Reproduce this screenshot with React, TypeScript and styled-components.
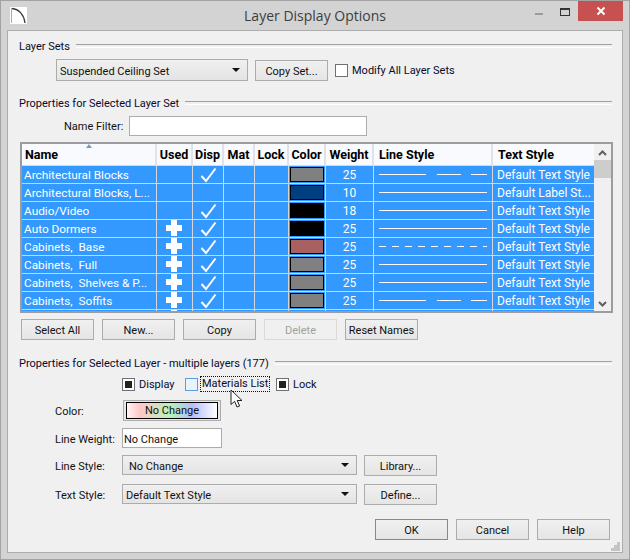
import styled, { createGlobalStyle } from 'styled-components';

const GlobalStyle = createGlobalStyle`
  html, body {
    margin: 0;
    padding: 0;
    background: #d3d3d3;
  }
  * {
    box-sizing: border-box;
  }
`;

const layers = [
  { name: 'Architectural Blocks', used: false, disp: true, color: '#808080', weight: '25', line: 'mixed', text: 'Default Text Style' },
  { name: 'Architectural Blocks, L...', used: false, disp: false, color: '#004080', weight: '10', line: 'solid', text: 'Default Label St...' },
  { name: 'Audio/Video', used: false, disp: true, color: '#000000', weight: '18', line: 'solid', text: 'Default Text Style' },
  { name: 'Auto Dormers', used: true, disp: true, color: '#000000', weight: '25', line: 'solid', text: 'Default Text Style' },
  { name: 'Cabinets,  Base', used: true, disp: true, color: '#a86060', weight: '25', line: 'dashed', text: 'Default Text Style' },
  { name: 'Cabinets,  Full', used: true, disp: true, color: '#808080', weight: '25', line: 'solid', text: 'Default Text Style' },
  { name: 'Cabinets,  Shelves & P...', used: true, disp: true, color: '#808080', weight: '25', line: 'solid', text: 'Default Text Style' },
  { name: 'Cabinets,  Soffits', used: true, disp: true, color: '#808080', weight: '25', line: 'mixed', text: 'Default Text Style' },
  // only the top pixel of this row shows under the list, so just the plus is seen
  { name: '', used: true, disp: false, color: 'transparent', weight: '', line: 'none', text: '' },
];

const COLUMNS = '135px 36px 31px 31px 34px 37px 48px 119px 101px';

const LineSample = ({ kind }: { kind: string }) => (
  <svg width="118" height="17" viewBox="0 0 118 17">
    {kind === 'solid' && <line x1="5" x2="113" y1="8.5" y2="8.5" stroke="#fff" />}
    {kind === 'dashed' && <line x1="5" x2="113" y1="8.5" y2="8.5" stroke="#fff" strokeDasharray="7 6" />}
    {kind === 'mixed' && (
      <>
        <line x1="5" x2="52" y1="8.5" y2="8.5" stroke="#fff" />
        <line x1="63" x2="87" y1="8.5" y2="8.5" stroke="#fff" />
        <line x1="97" x2="113" y1="8.5" y2="8.5" stroke="#fff" />
      </>
    )}
  </svg>
);

const App = () => (
  <>
    <GlobalStyle />
    <Window>
      <TitleBar>
        <AppIcon width="17" height="17" viewBox="0 0 17 17">
          <rect x="0" y="0" width="17" height="17" fill="#fff" />
          <line x1="1.5" y1="1" x2="1.5" y2="16" stroke="#a4c24a" strokeWidth="1" />
          <path d="M2 1.5 C9 2 14 8 15 16" fill="none" stroke="#3a3a3a" strokeWidth="1.3" />
        </AppIcon>
        <Title>Layer Display Options</Title>
        <Minimize />
        <Maximize />
        <CloseButton>
          <svg width="10" height="10" viewBox="0 0 10 10">
            <path d="M1.5 1.5 L8.5 8.5 M8.5 1.5 L1.5 8.5" stroke="#fff" strokeWidth="2" />
          </svg>
        </CloseButton>
      </TitleBar>

      <Client>
        <GroupHeading $top={7}>
          <span>Layer Sets</span>
        </GroupHeading>
        <SetRow>
          <Combo $width={192} $height={22} $textInset={3}>
            <span>Suspended Ceiling Set</span>
            <Arrow />
          </Combo>
          <Button $width={73}>Copy Set...</Button>
          <CheckItem $width={100}>
            <CheckBox />
            Modify All Layer Sets
          </CheckItem>
        </SetRow>

        <GroupHeading $top={14}>
          <span>Properties for Selected Layer Set</span>
        </GroupHeading>
        <FilterRow>
          <FilterLabel>Name Filter:</FilterLabel>
          <TextField $width={238} $height={20} />
        </FilterRow>

        <Table>
          <HeaderRow>
            <HeaderCell>Name</HeaderCell>
            <HeaderCell $center>Used</HeaderCell>
            <HeaderCell $center>Disp</HeaderCell>
            <HeaderCell $center>Mat</HeaderCell>
            <HeaderCell $center>Lock</HeaderCell>
            <HeaderCell $center>Color</HeaderCell>
            <HeaderCell $center>Weight</HeaderCell>
            <HeaderCell>Line Style</HeaderCell>
            <HeaderCell>Text Style</HeaderCell>
            <SortArrow />
          </HeaderRow>
          <Body>
            {layers.map((layer) => (
              <Row key={layer.name}>
                <NameCell>{layer.name}</NameCell>
                <UsedCell $center>
                  {layer.used && (
                    <svg width="16" height="17" viewBox="0 0 16 17">
                      <path d="M5 0h6v5h5v6h-5v5H5v-5H0V5h5z" fill="#fff" />
                    </svg>
                  )}
                </UsedCell>
                <Cell $center>
                  {layer.disp && (
                    <svg width="17" height="16" viewBox="0 0 17 16">
                      <path d="M1.5 9 L6 14 L15.5 1.5" fill="none" stroke="#fff" strokeWidth="2" />
                    </svg>
                  )}
                </Cell>
                <Cell />
                <Cell />
                <Cell $center>
                  {layer.weight && <Swatch $color={layer.color} />}
                </Cell>
                <TextCell $center>{layer.weight}</TextCell>
                <LineCell>
                  <LineSample kind={layer.line} />
                </LineCell>
                <StyleCell>{layer.text}</StyleCell>
              </Row>
            ))}
          </Body>
          <ScrollBar>
            <svg width="9" height="6" viewBox="0 0 9 6">
              <path d="M1 5 L4.5 1.5 L8 5" fill="none" stroke="#606060" strokeWidth="2" />
            </svg>
            <Thumb />
            <svg width="9" height="6" viewBox="0 0 9 6">
              <path d="M1 1 L4.5 4.5 L8 1" fill="none" stroke="#606060" strokeWidth="2" />
            </svg>
          </ScrollBar>
        </Table>

        <ButtonRow>
          <Button $width={73}>Select All</Button>
          <Button $width={73}>New...</Button>
          <Button $width={73}>Copy</Button>
          <Button $width={73} $disabled>Delete</Button>
          <Button $width={73}>Reset Names</Button>
        </ButtonRow>

        <GroupHeading $top={15}>
          <span>Properties for Selected Layer - multiple layers (177)</span>
        </GroupHeading>

        <ChecksRow>
          <CheckItem $width={63}>
            <CheckBox $mixed />
            Display
          </CheckItem>
          <CheckItem $width={91} $gap={2}>
            <CheckBox $hover />
            <FocusLabel>Materials List</FocusLabel>
          </CheckItem>
          <CheckItem $width={50}>
            <CheckBox $mixed />
            Lock
          </CheckItem>
        </ChecksRow>

        <FormRow $top={8}>
          <FieldLabel>Color:</FieldLabel>
          <ColorButton>
            <ColorFace>No Change</ColorFace>
          </ColorButton>
        </FormRow>
        <FormRow $top={7}>
          <FieldLabel>Line Weight:</FieldLabel>
          <TextField $width={100} $height={20}>No Change</TextField>
        </FormRow>
        <FormRow $top={6}>
          <FieldLabel>Line Style:</FieldLabel>
          <Combo $width={235} $height={20} $textInset={6}>
            <span>No Change</span>
            <Arrow />
          </Combo>
          <Button $width={73}>Library...</Button>
        </FormRow>
        <FormRow $top={8}>
          <FieldLabel>Text Style:</FieldLabel>
          <Combo $width={235} $height={20} $textInset={3}>
            <span>Default Text Style</span>
            <Arrow />
          </Combo>
          <Button $width={73}>Define...</Button>
        </FormRow>

        <DialogButtons>
          <Button $width={73} $focused>OK</Button>
          <Button $width={73}>Cancel</Button>
          <Button $width={73}>Help</Button>
        </DialogButtons>

        <Grip width="9" height="9" viewBox="0 0 9 9">
          <path d="M6 0h3v3H6zM3 3h3v3H3zM6 3h3v3H6zM0 6h3v3H0zM3 6h3v3H3zM6 6h3v3H6z" fill="#c4c4c4" />
        </Grip>
      </Client>

      <Cursor width="14" height="20" viewBox="0 0 14 20">
        <path
          d="M1 1 L1 15.5 L4.6 12.3 L7 18 L9.6 17 L7.2 11.5 L12 11.5 Z"
          fill="#fff"
          stroke="#222"
          strokeWidth="1"
        />
      </Cursor>
    </Window>
  </>
);

const Window = styled.div`
  position: relative;
  width: 630px;
  height: 560px;
  display: flex;
  flex-direction: column;
  background: #d3d3d3;
  border: 1px solid #a3a3a3;
  font-family: Roboto, 'Open Sans', sans-serif;
  font-size: 11px;
  color: #111;
`;

const TitleBar = styled.div`
  position: relative;
  height: 29px;
  flex: none;
  display: flex;
  align-items: flex-start;
`;

const AppIcon = styled.svg`
  position: absolute;
  left: 9px;
  top: 6px;
`;

const Title = styled.div`
  width: 100%;
  text-align: center;
  font-family: 'Open Sans', sans-serif;
  font-size: 14px;
  line-height: 29px;
  color: #3d3d3d;
`;

const Minimize = styled.div`
  position: absolute;
  left: 534px;
  top: 12px;
  width: 8px;
  height: 2px;
  background: #9a9a9a;
`;

const Maximize = styled.div`
  position: absolute;
  left: 559px;
  top: 7px;
  width: 10px;
  height: 8px;
  border: 1px solid #333;
  border-top-width: 2px;
`;

const CloseButton = styled.div`
  position: absolute;
  right: 6px;
  top: 0;
  width: 45px;
  height: 20px;
  display: flex;
  align-items: center;
  justify-content: center;
  background: #c75050;
`;

const Client = styled.div`
  position: relative;
  flex: none;
  height: 523px;
  margin: 0 6px 0 6px;
  padding: 0 10px 0 11px;
  display: flex;
  flex-direction: column;
  background: #f0f0f0;
  border: 1px solid #acacac;
`;

const GroupHeading = styled.div<{ $top: number }>`
  margin-top: ${(p) => p.$top}px;
  height: 16px;
  flex: none;
  display: flex;
  align-items: center;
  gap: 6px;
  line-height: 16px;
  color: #0a0a2a;

  span {
    margin-top: 2px;
  }

  &::after {
    content: '';
    flex: 1;
    height: 2px;
    border-top: 1px solid #a0a0a0;
    border-bottom: 1px solid #fff;
  }
`;

const SetRow = styled.div`
  margin: 5px 0 0 37px;
  height: 22px;
  flex: none;
  display: flex;
  align-items: center;
  gap: 7px;
`;

const Combo = styled.div<{ $width: number; $height: number; $textInset: number }>`
  width: ${(p) => p.$width}px;
  height: ${(p) => p.$height}px;
  flex: none;
  align-self: flex-start;
  display: flex;
  align-items: center;
  justify-content: space-between;
  padding: 0 7px 0 ${(p) => p.$textInset}px;
  background: linear-gradient(#f0f0f0, #e4e4e4);
  border: 1px solid #acacac;
  white-space: nowrap;

  span:first-child {
    margin-top: 2px;
  }
`;

const Arrow = styled.span`
  width: 0;
  height: 0;
  border-left: 4px solid transparent;
  border-right: 4px solid transparent;
  border-top: 4px solid #111;
`;

const Button = styled.div<{ $width: number; $disabled?: boolean; $focused?: boolean }>`
  width: ${(p) => p.$width}px;
  height: 21px;
  flex: none;
  align-self: flex-end;
  padding-top: 1px;
  display: flex;
  align-items: center;
  justify-content: center;
  white-space: nowrap;
  background: ${(p) => (p.$disabled ? '#f0f0f0' : 'linear-gradient(#f0f0f0, #e5e5e5)')};
  border: 1px solid ${(p) => (p.$disabled ? '#d9d9d9' : p.$focused ? '#3c9bf0' : '#acacac')};
  color: ${(p) => (p.$disabled ? '#a0a0a0' : '#111')};
`;

const CheckItem = styled.div<{ $width: number; $gap?: number }>`
  width: ${(p) => p.$width}px;
  flex: none;
  display: flex;
  align-items: center;
  gap: ${(p) => p.$gap ?? 4}px;
  white-space: nowrap;
  color: #0a0a2a;
`;

const CheckBox = styled.span<{ $mixed?: boolean; $hover?: boolean }>`
  width: 13px;
  height: 13px;
  flex: none;
  display: flex;
  align-items: center;
  justify-content: center;
  background: ${(p) => (p.$hover ? '#e9f3fd' : '#fff')};
  border: 1px solid ${(p) => (p.$hover ? '#5b9fe0' : '#707070')};

  &::after {
    content: '';
    display: ${(p) => (p.$mixed ? 'block' : 'none')};
    width: 7px;
    height: 7px;
    background: #222;
  }
`;

const FocusLabel = styled.span`
  padding: 0 1px;
  height: 16px;
  line-height: 14px;
  border: 1px dotted #111;
`;

const FilterRow = styled.div`
  margin: 5px 0 0 45px;
  height: 20px;
  flex: none;
  display: flex;
  align-items: center;
  gap: 7px;
`;

const FilterLabel = styled.span`
  width: 58px;
  padding-top: 1px;
  text-align: right;
  white-space: nowrap;
`;

const TextField = styled.div<{ $width: number; $height: number }>`
  width: ${(p) => p.$width}px;
  height: ${(p) => p.$height}px;
  flex: none;
  align-self: flex-start;
  padding: 2px 0 0 1px;
  display: flex;
  align-items: center;
  background: #fff;
  border: 1px solid #acacac;
`;

const Table = styled.div`
  position: relative;
  margin: 6px 0 0 1px;
  width: 593px;
  height: 171px;
  flex: none;
  display: grid;
  grid-template-columns: 572px 17px;
  grid-template-rows: 22px 1fr;
  border: 2px solid #9b9ba0;
  background: #fff;
`;

const HeaderRow = styled.div`
  position: relative;
  display: grid;
  grid-template-columns: ${COLUMNS};
  background: #f9fafd;
`;

const HeaderCell = styled.div<{ $center?: boolean }>`
  display: flex;
  align-items: center;
  justify-content: ${(p) => (p.$center ? 'center' : 'flex-start')};
  padding-left: ${(p) => (p.$center ? 0 : 3)}px;
  font-weight: 700;
  font-size: 12.5px;
  color: #000;
  white-space: nowrap;
  border-right: 2px solid #dfe3e8;
  border-bottom: 1px solid #d6dae0;

  &:nth-child(8) {
    padding-left: 5px;
  }
  &:nth-child(9) {
    padding-left: 5px;
    border-right: 0;
  }
`;

const SortArrow = styled.span`
  position: absolute;
  left: 64px;
  top: 0;
  width: 0;
  height: 0;
  border-left: 3.5px solid transparent;
  border-right: 3.5px solid transparent;
  border-bottom: 4px solid #7b9cb8;
`;

const Body = styled.div`
  grid-column: 1;
  overflow: hidden;
  min-height: 0;
  background: #3399ff;
`;

const Row = styled.div`
  display: grid;
  grid-template-columns: ${COLUMNS};
  height: 18px;
  border-bottom: 1px solid #d2d6da;
`;

const Cell = styled.div<{ $center?: boolean }>`
  min-width: 0;
  display: flex;
  align-items: center;
  justify-content: ${(p) => (p.$center ? 'center' : 'flex-start')};
  padding-left: ${(p) => (p.$center ? 0 : 3)}px;
  font-size: 12px;
  color: #fff;
  white-space: pre;
  overflow: visible;
  background: #3399ff;
  border-right: 1px solid #d2d6da;

  &:last-child {
    border-right: 0;
  }
`;

const TextCell = styled(Cell)`
  padding-top: 1px;
`;

const NameCell = styled(TextCell)`
  padding-left: 2px;
  font-size: 11.8px;
`;

const StyleCell = styled(TextCell)`
  padding-left: 4px;
`;

const UsedCell = styled(Cell)`
  padding-right: 1px;
`;

const LineCell = styled(Cell)`
  padding-left: 0;
`;

const Swatch = styled.span<{ $color: string }>`
  width: 34px;
  height: 15px;
  background: ${(p) => p.$color};
  border: 1px solid #000;
`;

const ScrollBar = styled.div`
  grid-column: 2;
  grid-row: 1 / span 2;
  display: flex;
  flex-direction: column;
  align-items: center;
  padding-top: 6px;
  padding-bottom: 4px;
  background: #f0f0f0;
`;

const Thumb = styled.div`
  margin-top: 4px;
  width: 100%;
  height: 18px;
  margin-bottom: auto;
  background: #cdcdcd;
`;

const ButtonRow = styled.div`
  margin: 6px 0 0 2px;
  height: 21px;
  flex: none;
  display: flex;
  gap: 8px;
`;

const ChecksRow = styled.div`
  margin: 5px 0 0 103px;
  height: 16px;
  flex: none;
  display: flex;
  align-items: center;
`;

const FormRow = styled.div<{ $top: number }>`
  margin: ${(p) => p.$top}px 0 0 36px;
  height: 21px;
  flex: none;
  display: flex;
  align-items: center;
  gap: 7px;
`;

const FieldLabel = styled.span`
  width: 60px;
  padding-top: 1px;
  white-space: nowrap;
`;

const ColorButton = styled.div`
  margin-left: 1px;
  width: 98px;
  height: 21px;
  padding: 1px 2px;
  background: #e8e8e8;
  border: 1px solid #acacac;
`;

const ColorFace = styled.div`
  height: 100%;
  display: flex;
  align-items: center;
  justify-content: center;
  border: 1px solid #000;
  background: linear-gradient(90deg, #fff4f4 0%, #ffc8c8 14%, #b8f2b8 48%, #b4bcff 72%, #ffffff 100%);
`;

const DialogButtons = styled.div`
  margin: 14px 0 0 auto;
  padding-right: 2px;
  height: 21px;
  flex: none;
  display: flex;
  gap: 8px;
`;

const Grip = styled.svg`
  position: absolute;
  right: 2px;
  bottom: 1px;
`;

const Cursor = styled.svg`
  position: absolute;
  left: 229px;
  top: 388px;
`;

export default App;
